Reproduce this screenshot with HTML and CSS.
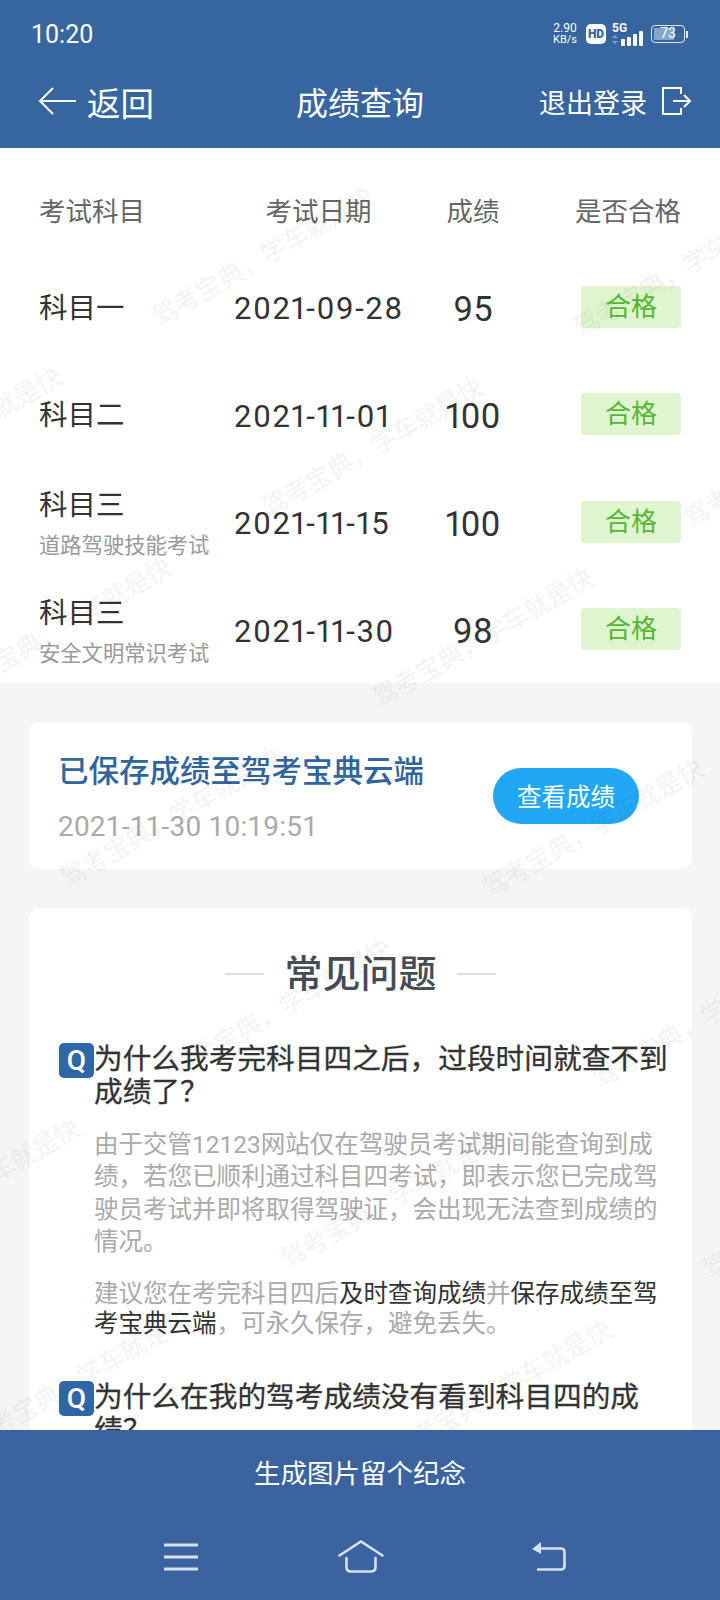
FILE: index.html
```html
<!DOCTYPE html>
<html lang="zh-CN">
<head>
  <meta charset="UTF-8" />
  <meta name="viewport" content="width=device-width, initial-scale=1" />
  <title>成绩查询</title>
  <link rel="stylesheet" href="styles.css">
</head>
<body>

  <header class="top">
    <div class="status">
      <span class="clock">10:20</span>
      <div class="status-icons">
        <span class="speed"><b>2.90</b><i>KB/s</i></span>
        <span class="hd">HD</span>
        <svg class="signal" width="33" height="26" viewBox="0 0 33 26">
          <text x="0" y="11" class="signal-text">5G</text>
          <path d="M3 14l3 3H0zM3 23l3-3H0z" fill="#7f9fc6"/>
          <rect x="9" y="18" width="4" height="7" rx="1" fill="#fff"/>
          <rect x="15" y="16" width="4" height="9" rx="1" fill="#fff"/>
          <rect x="21" y="13" width="4" height="12" rx="1" fill="#fff"/>
          <rect x="27" y="10" width="4" height="15" rx="1" fill="#fff"/>
        </svg>
        <span class="battery"><span class="battery-fill"></span><span class="battery-num">73</span></span>
        <span class="battery-tip"></span>
      </div>
    </div>
    <nav class="bar">
      <div class="back">
        <svg width="40" height="30" viewBox="0 0 40 30" fill="none" stroke="#fff" stroke-width="2">
          <path d="M38 15H2M15 2L2 15l13 13"/>
        </svg>
        <span>返回</span>
      </div>
      <h1>成绩查询</h1>
      <div class="logout">
        <span>退出登录</span>
        <svg width="31" height="30" viewBox="0 0 31 30" fill="none" stroke="#fff" stroke-width="2">
          <path d="M20 8V2H2v26h18v-6M12 15h17M23 9l6 6-6 6"/>
        </svg>
      </div>
    </nav>
  </header>

  <main class="content">
    <section class="scores">
      <div class="row row-head">
        <span>考试科目</span>
        <span class="center">考试日期</span>
        <span class="center">成绩</span>
        <span class="right">是否合格</span>
      </div>
      <div class="row">
        <div class="subject">科目一</div>
        <div class="date">2021-09-28</div>
        <div class="score">95</div>
        <div class="right"><span class="pass">合格</span></div>
      </div>
      <div class="row">
        <div class="subject">科目二</div>
        <div class="date">2021-11-01</div>
        <div class="score">100</div>
        <div class="right"><span class="pass">合格</span></div>
      </div>
      <div class="row">
        <div class="subject">科目三<small>道路驾驶技能考试</small></div>
        <div class="date">2021-11-15</div>
        <div class="score">100</div>
        <div class="right"><span class="pass">合格</span></div>
      </div>
      <div class="row">
        <div class="subject">科目三<small>安全文明常识考试</small></div>
        <div class="date">2021-11-30</div>
        <div class="score">98</div>
        <div class="right"><span class="pass">合格</span></div>
      </div>
    </section>

    <section class="card saved">
      <div>
        <div class="saved-title">已保存成绩至驾考宝典云端</div>
        <div class="saved-time">2021-11-30 10:19:51</div>
      </div>
      <button class="btn-view">查看成绩</button>
    </section>

    <section class="card faq">
      <h2><span>常见问题</span></h2>
      <div class="question"><span class="q">Q</span><p>为什么我考完科目四之后，过段时间就查不到成绩了？</p></div>
      <p class="answer">由于交管12123网站仅在驾驶员考试期间能查询到成绩，若您已顺利通过科目四考试，即表示您已完成驾驶员考试并即将取得驾驶证，会出现无法查到成绩的情况。</p>
      <p class="answer tip">建议您在考完科目四后<em>及时查询成绩</em>并<em>保存成绩至驾考宝典云端</em>，可永久保存，避免丢失。</p>
      <div class="question next"><span class="q">Q</span><p>为什么在我的驾考成绩没有看到科目四的成绩？</p></div>
    </section>

    <svg class="watermark" width="720" height="1282">
      <defs>
        <pattern id="wm" width="360" height="220" patternUnits="userSpaceOnUse" patternTransform="translate(147 158) rotate(-30)">
          <text x="0" y="0" dy="24" class="wm-text">驾考宝典，学车就是快</text>
        </pattern>
      </defs>
      <rect width="720" height="1282" fill="url(#wm)"/>
    </svg>
  </main>

  <footer class="bottom">
    <div class="make">生成图片留个纪念</div>
    <div class="navkeys">
      <svg width="34" height="28" viewBox="0 0 34 28" fill="none" stroke="#d5e2f3" stroke-width="3">
        <path d="M0 2h34M0 14h34M0 26h34"/>
      </svg>
      <svg class="key-home" width="46" height="33" viewBox="0 0 46 33" fill="none" stroke="#d5e2f3" stroke-width="2.6" stroke-linecap="round">
        <path d="M1.5 15.5L23 1.5l21.5 14"/>
        <path d="M8.5 18v9q0 4.5 4.5 4.5h20q4.5 0 4.5-4.5v-9"/>
      </svg>
      <svg width="34" height="29" viewBox="0 0 34 29" fill="none" stroke="#d5e2f3" stroke-width="2.6">
        <path d="M7 6.5h22q3.5 0 3.5 3.5v14q0 3.5-3.5 3.5H5"/>
        <path d="M9 0v12L0 7z" fill="#d5e2f3" stroke="none"/>
      </svg>
    </div>
  </footer>

</body>
</html>
```

FILE: styles.css
```css
* {
  box-sizing: border-box;
}
body {
  margin: 0;
  width: 720px;
  height: 1600px;
  overflow: hidden;
  display: flex;
  flex-direction: column;
  background: #f5f5f5;
  color: #333;
  font-family: Roboto, "Noto Sans CJK SC", sans-serif;
}

/* cabecalho */
.top {
  height: 148px;
  background: #36659f;
  color: #fff;
  flex: none;
}
.status {
  height: 68px;
  padding: 0 32px 0 31px;
  display: flex;
  justify-content: space-between;
  align-items: center;
}
.clock {
  font-size: 25px;
}
.status-icons {
  display: flex;
  align-items: center;
  gap: 6px;
}
.speed {
  display: flex;
  flex-direction: column;
  align-items: center;
  margin-right: 3px;
  font-size: 11px;
  line-height: 11px;
}
.speed b {
  font-weight: 400;
  font-size: 12px;
}
.speed i {
  font-style: normal;
}
.hd {
  width: 20px;
  height: 20px;
  background: #fff;
  color: #36659f;
  border-radius: 5px;
  font-size: 12px;
  font-weight: 900;
  line-height: 20px;
  text-align: center;
}
.signal-text {
  fill: #fff;
  font-size: 12px;
  font-weight: 700;
}
.battery {
  position: relative;
  width: 34px;
  height: 18px;
  border: 1.5px solid #dfe8f3;
  border-radius: 4px;
  display: block;
  padding: 2px;
}
.battery-fill {
  display: block;
  width: 73%;
  height: 100%;
  background: #86a5cb;
}
.battery-num {
  position: absolute;
  inset: 0;
  font-size: 14px;
  line-height: 15px;
  text-align: center;
}
.battery-tip {
  width: 2px;
  height: 7px;
  background: #dfe8f3;
  margin-left: -5px;
}
.bar {
  height: 80px;
  padding: 0 28px 14px;
  display: grid;
  grid-template-columns: 1fr auto 1fr;
  align-items: center;
}
.bar h1 {
  margin: 0;
  font-size: 32px;
  font-weight: 400;
}
.back {
  display: flex;
  align-items: center;
  gap: 9px;
  margin-left: 10px;
  font-size: 33.5px;
}
.logout {
  display: flex;
  align-items: center;
  justify-content: flex-end;
  gap: 14px;
  font-size: 27px;
}

/* conteudo */
.content {
  position: relative;
  flex: 1;
  overflow: hidden;
}
.scores {
  height: 535px;
  background: #fff;
  padding: 16px 39px 0 39px;
}
.row {
  display: grid;
  grid-template-columns: 195px 169px 140px 138px;
  height: 107.5px;
  align-items: center;
}
.row-head {
  height: 91px;
  font-size: 26.5px;
  color: #666;
}
.center {
  text-align: center;
}
.right {
  display: flex;
  justify-content: flex-end;
  white-space: nowrap;
}
.subject {
  font-size: 28.5px;
  line-height: 40px;
}
.subject small {
  display: block;
  margin-top: 5px;
  font-size: 21.3px;
  line-height: 30px;
  color: #999;
  white-space: nowrap;
}
.date {
  font-size: 31px;
  letter-spacing: 1.5px;
  font-variant-numeric: proportional-nums;
  white-space: nowrap;
}
.score {
  font-size: 34.5px;
  font-variant-numeric: proportional-nums;
  text-align: center;
}
.pass {
  width: 100px;
  height: 42px;
  margin-bottom: 4px;
  background: #dff5d0;
  color: #52b830;
  border-radius: 4px;
  font-size: 26px;
  line-height: 42px;
  text-align: center;
}
.card {
  background: #fff;
  border-radius: 10px;
  margin: 39px 28px 0 29px;
}
.saved {
  height: 147px;
  padding: 3px 53px 0 29px;
  display: flex;
  justify-content: space-between;
  align-items: center;
}
.saved-title {
  font-size: 30.5px;
  font-weight: 500;
  color: #2f649f;
  line-height: 42px;
}
.saved-time {
  font-size: 28px;
  letter-spacing: 0.2px;
  color: #aaa;
  margin-top: 17px;
}
.btn-view {
  width: 146px;
  height: 56px;
  margin-top: -3px;
  border: none;
  border-radius: 28px;
  background: #22a7f5;
  color: #fff;
  font-family: inherit;
  font-size: 24.5px;
}
.faq {
  height: 600px;
  padding: 36px 24px 0 30px;
}
.faq h2 {
  margin: 0 0 39px -6px;
  display: flex;
  justify-content: center;
  align-items: center;
  gap: 20px;
  font-size: 38px;
  font-weight: 500;
  line-height: 60px;
  color: #444c55;
}
.faq h2::before, .faq h2::after {
  content: "";
  width: 39px;
  height: 2px;
  background: #ddd;
}
.question {
  display: flex;
  font-size: 28.7px;
  line-height: 33px;
  color: #333;
  -webkit-text-stroke: 0.3px #333;
}
.question p {
  margin: 0;
}
.question.next {
  margin-top: 43px;
}
.q {
  flex: none;
  width: 35px;
  height: 35px;
  background: #2f66a8;
  color: #fff;
  -webkit-text-stroke: 0;
  border-radius: 5px;
  font-size: 28px;
  font-weight: 500;
  line-height: 35px;
  text-align: center;
}
.answer {
  margin: 20px 0 0 35px;
  font-size: 24.5px;
  line-height: 32.3px;
  color: #aaa;
}
.answer.tip {
  margin-top: 21px;
  line-height: 29.6px;
}
.answer em {
  font-style: normal;
  color: #333;
}
.watermark {
  position: absolute;
  top: 0;
  left: 0;
  pointer-events: none;
}
.wm-text {
  font-size: 25px;
  fill: rgba(0, 0, 0, 0.05);
}

/* rodape */
.bottom {
  height: 170px;
  flex: none;
  background: #3b639f;
  color: #fff;
}
.make {
  padding-top: 25px;
  font-size: 26.5px;
  line-height: 38px;
  text-align: center;
}
.navkeys {
  display: flex;
  justify-content: space-between;
  align-items: center;
  padding: 47px 154px 0 164px;
}
.key-home {
  margin-right: 8px;
}
```
